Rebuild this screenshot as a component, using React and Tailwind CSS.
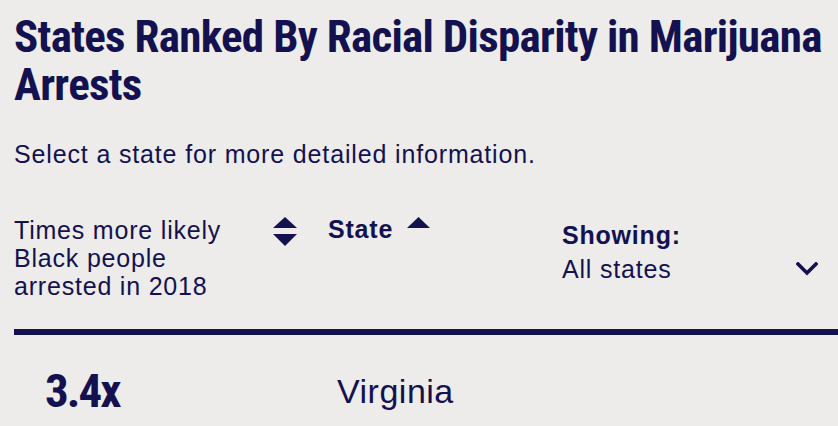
// States ranked table header

const sans = 'font-["Liberation_Sans",Arial,sans-serif]'
const cond = 'font-["Roboto_Condensed","Open_Sans_Condensed",sans-serif]'

function SortBoth() {
  return (
    <svg width="24" height="29" viewBox="0 0 24 29" className="shrink-0 fill-current">
      <polygon points="12,0 24,11 0,11" />
      <polygon points="0,17 24,17 12,29" />
    </svg>
  )
}

function SortUp() {
  return (
    <svg width="23" height="11" viewBox="0 0 23 11" className="shrink-0 fill-current">
      <polygon points="11.5,0 23,11 0,11" />
    </svg>
  )
}

function Chevron() {
  return (
    <svg width="22" height="14" viewBox="0 0 22 14" className="shrink-0">
      <polyline
        points="2,2 11,11 20,2"
        fill="none"
        stroke="currentColor"
        strokeWidth="3.6"
        strokeLinecap="square"
      />
    </svg>
  )
}

export default function App() {
  return (
    <div className={`min-h-screen w-full overflow-hidden bg-[#edecea] text-[#13114f] ${sans}`}>
      {/* Heading */}
      <div className="pl-[14px] pr-[6px] pt-[13px]">
        <h1 className={`${cond} text-[45px] leading-[48px] font-bold tracking-[-0.7px]`}>
          States Ranked By Racial Disparity in Marijuana Arrests
        </h1>
        <p className="mt-[31px] text-[25px] leading-[28px] tracking-[0.85px]">
          Select a state for more detailed information.
        </p>
      </div>

      {/* Table header */}
      <div className="flex items-start pl-[14px] pr-[20px] mt-[48px]">
        <div className="w-[259px] shrink-0 text-[25px] leading-[28px] tracking-[0.8px]">
          <div className="w-[220px]">Times more likely Black people arrested in 2018</div>
        </div>
        <div className="mt-[1px]">
          <SortBoth />
        </div>
        <div className="w-[265px] shrink-0 flex items-start pl-[31px]">
          <span className="text-[25px] leading-[28px] font-bold tracking-[0.8px] -mt-[1px]">State</span>
          <div className="ml-[14px] mt-[1px]">
            <SortUp />
          </div>
        </div>
        <div className="flex-1 text-[25px] leading-[34px] tracking-[0.8px] mt-[2px]">
          <div className="font-bold">Showing:</div>
          <div className="flex items-center justify-between">
            <span>All states</span>
            <Chevron />
          </div>
        </div>
      </div>

      {/* Rule */}
      <div className="ml-[14px] mt-[29px] h-[6px] bg-[#13114f]" />

      {/* First row */}
      <div className="flex items-center pl-[14px] pt-[32px]">
        <div className={`w-[323px] shrink-0 pl-[31px] ${cond} text-[47px] leading-[48px] font-bold tracking-[-2px]`}>
          3.4x
        </div>
        <div className="text-[34px] leading-[34px] tracking-[0.5px]">Virginia</div>
      </div>
    </div>
  )
}
